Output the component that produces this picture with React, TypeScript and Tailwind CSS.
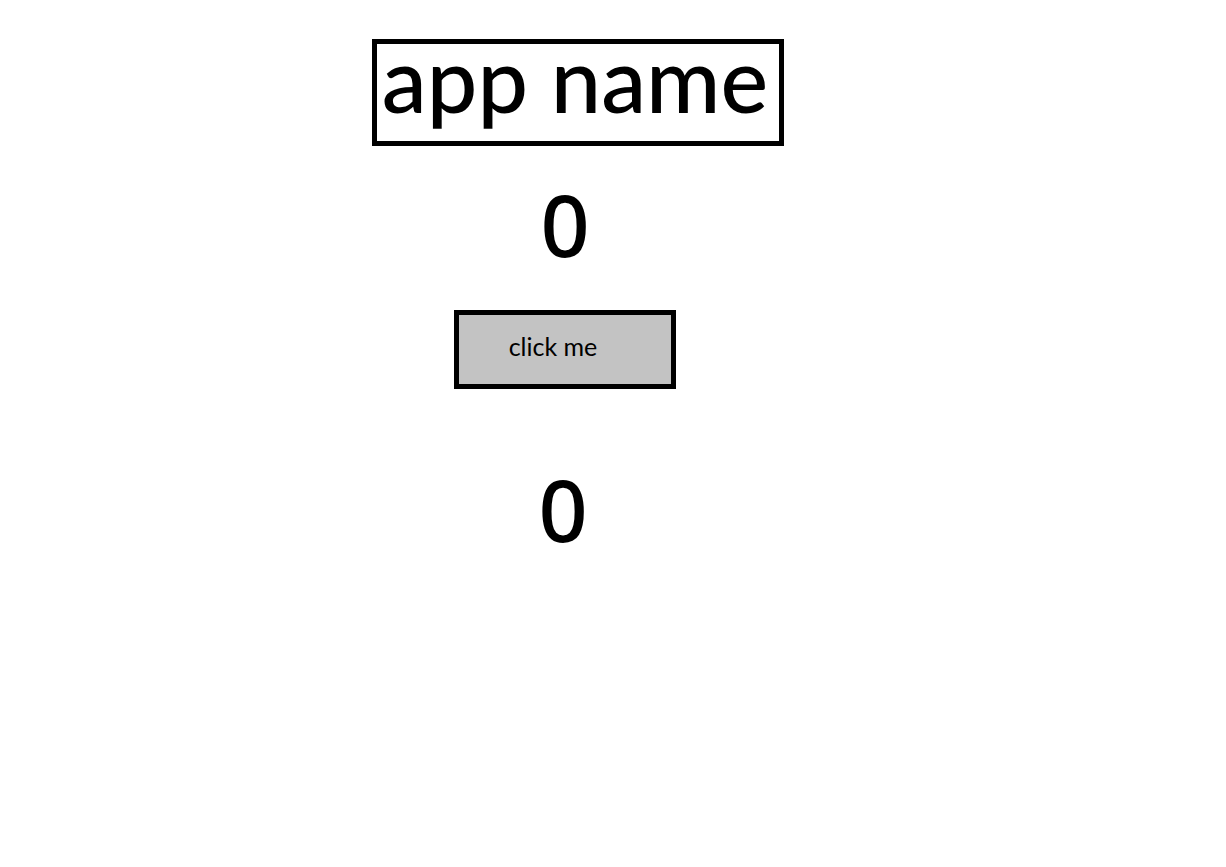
import { useState } from "react";

export default function App() {
  const [count, setCount] = useState(0);
  return (
    <main className="flex min-h-screen flex-col items-center bg-white pt-[39px] pr-[96px] font-['Lato',sans-serif] text-black">
      <h1 className="ml-[26px] flex h-[107px] w-[412px] justify-center border-5 border-black pr-1.5 text-[90px] leading-[68px] font-medium whitespace-nowrap">
        app name
      </h1>
      <output className="mt-[38px] font-['Noto_Sans',sans-serif] text-[86px] leading-[80px] font-medium">{count}</output>
      <button
        type="button"
        onClick={() => setCount(count + 1)}
        className="mt-[46px] h-[79px] w-[222px] border-5 border-black bg-[#c3c3c3] pr-6 pb-2 text-[25px] leading-8"
      >
        click me
      </button>
      <output className="mt-20 pr-1 font-['Noto_Sans',sans-serif] text-[86px] leading-[80px] font-medium">{count}</output>
    </main>
  );
}
